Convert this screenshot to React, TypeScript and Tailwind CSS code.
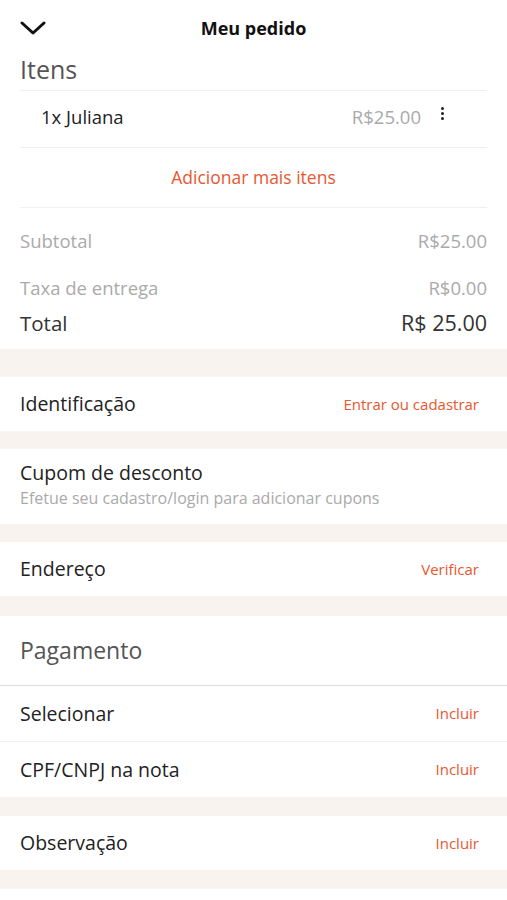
import React from "react";

const orange = "text-[#e9572f]";

const Band = ({ h }: { h: string }) => <div className={`${h} bg-[#f8f3ef]`} />;

const LinkRow = ({ label, action }: { label: string; action: string }) => (
  <div className="h-[54px] flex items-center justify-between px-5">
    <span className="text-[19.5px] text-[#222]">{label}</span>
    <span className={`text-[15px] ${orange} pr-2`}>{action}</span>
  </div>
);

const App = () => {
  return (
    <div className="w-[507px] min-h-[900px] bg-white font-['Open_Sans',sans-serif]">
      {/* header */}
      <div className="relative h-14 flex items-center justify-center">
        <button className="absolute left-[20px] top-[17px]">
          <svg width="26" height="22" viewBox="0 0 26 22" fill="none">
            <path
              d="M2 6 L13 16 L24 6"
              stroke="#111"
              strokeWidth="3"
              strokeLinecap="round"
              strokeLinejoin="round"
            />
          </svg>
        </button>
        <h1 className="text-[18px] font-bold text-[#111]">Meu pedido</h1>
      </div>

      {/* itens */}
      <div className="px-5">
        <div className="h-[35px] flex items-center pb-[7px] border-b border-[#f0f0f0]">
          <span className="text-[25px] text-[#555]">Itens</span>
        </div>
        <div className="h-[57px] flex items-center pb-1 pl-[21px] border-b border-[#f0f0f0]">
          <span className="text-[18.5px] text-[#222] flex-1">1x Juliana</span>
          <span className="text-[18.5px] text-[#aaa]">R$25.00</span>
          <span className="ml-[20px] mr-[43px] flex flex-col gap-[2px] -mt-2">
            <span className="w-[3px] h-[3px] rounded-full bg-[#222]" />
            <span className="w-[3px] h-[3px] rounded-full bg-[#222]" />
            <span className="w-[3px] h-[3px] rounded-full bg-[#222]" />
          </span>
        </div>
        <div className="h-[60px] flex items-center justify-center border-b border-[#f0f0f0]">
          <span className={`text-[17.5px] ${orange}`}>Adicionar mais itens</span>
        </div>
        <div className="pt-[20px] pb-[13px]">
          <div className="h-[26px] flex items-center justify-between text-[18.5px] text-[#aaa]">
            <span>Subtotal</span>
            <span>R$25.00</span>
          </div>
          <div className="h-[26px] mt-[21px] flex items-center justify-between text-[18.5px] text-[#aaa]">
            <span>Taxa de entrega</span>
            <span>R$0.00</span>
          </div>
          <div className="h-[26px] mt-[9px] flex items-center justify-between text-[#333]">
            <span className="text-[20.5px]">Total</span>
            <span className="text-[21.5px]">R$ 25.00</span>
          </div>
        </div>
      </div>

      <Band h="h-[28px]" />
      <LinkRow label="Identificação" action="Entrar ou cadastrar" />
      <Band h="h-[18px]" />

      <div className="h-[75px] px-5 pt-[11px]">
        <div className="text-[19.5px] leading-[25px] text-[#222]">Cupom de desconto</div>
        <div className="mt-[3px] text-[16px] leading-[21px] text-[#aaa]">
          Efetue seu cadastro/login para adicionar cupons
        </div>
      </div>

      <Band h="h-[18px]" />
      <LinkRow label="Endereço" action="Verificar" />
      <Band h="h-[20px]" />

      <div className="h-[70px] flex items-center px-5 border-b border-[#dcdcdc]">
        <span className="text-[23px] text-[#555]">Pagamento</span>
      </div>
      <div className="border-b border-[#f0f0f0]">
        <div className="h-[55px] flex items-center justify-between px-5">
          <span className="text-[19.5px] text-[#222]">Selecionar</span>
          <span className={`text-[15px] ${orange} pr-2`}>Incluir</span>
        </div>
      </div>
      <div className="h-[55px] flex items-center justify-between px-5">
        <span className="text-[19.5px] text-[#222]">CPF/CNPJ na nota</span>
        <span className={`text-[15px] ${orange} pr-2`}>Incluir</span>
      </div>

      <Band h="h-[19px]" />
      <LinkRow label="Observação" action="Incluir" />
      <Band h="h-[19px]" />
    </div>
  );
};

export default App;
